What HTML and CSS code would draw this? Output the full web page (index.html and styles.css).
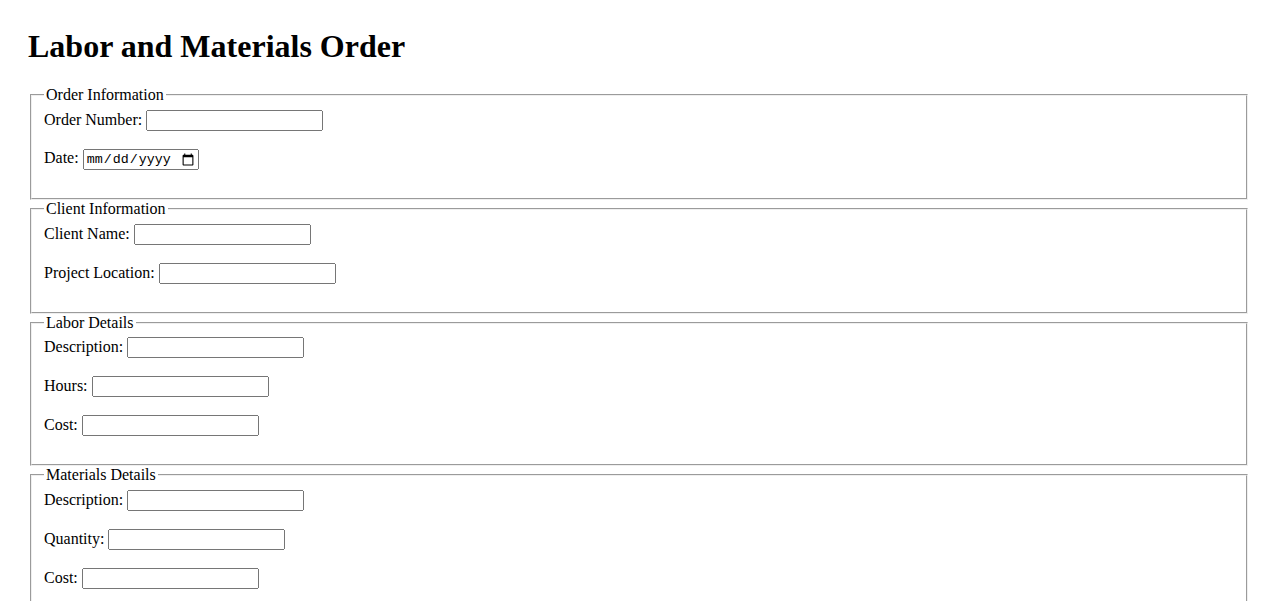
FILE: index.html
```html
<!DOCTYPE html>
<html lang="en">
<head>
<meta charset="utf-8">
<title>Labor and Materials Order</title>
<link rel="stylesheet" href="styles.css">
</head>
<body>
<div class="page">
<h1 class="title">Labor and Materials Order</h1>
<form class="order-form">
  <fieldset class="group">
    <legend class="group-title">Order Information</legend>
    <label class="field-label" for="orderNumber">Order Number:</label>
    <input class="field" type="text" id="orderNumber"><br><br>
    <label class="field-label" for="orderDate">Date:</label>
    <input class="field date" type="date" id="orderDate"><br><br>
  </fieldset>
  <fieldset class="group">
    <legend class="group-title">Client Information</legend>
    <label class="field-label" for="clientName">Client Name:</label>
    <input class="field" type="text" id="clientName"><br><br>
    <label class="field-label" for="projectLocation">Project Location:</label>
    <input class="field" type="text" id="projectLocation"><br><br>
  </fieldset>
  <fieldset class="group">
    <legend class="group-title">Labor Details</legend>
    <label class="field-label" for="laborDescription">Description:</label>
    <input class="field" type="text" id="laborDescription"><br><br>
    <label class="field-label" for="laborHours">Hours:</label>
    <input class="field" type="text" id="laborHours"><br><br>
    <label class="field-label" for="laborCost">Cost:</label>
    <input class="field" type="text" id="laborCost"><br><br>
  </fieldset>
  <fieldset class="group">
    <legend class="group-title">Materials Details</legend>
    <label class="field-label" for="materialsDescription">Description:</label>
    <input class="field" type="text" id="materialsDescription"><br><br>
    <label class="field-label" for="materialsQuantity">Quantity:</label>
    <input class="field" type="text" id="materialsQuantity"><br><br>
    <label class="field-label" for="materialsCost">Cost:</label>
    <input class="field" type="text" id="materialsCost"><br><br>
  </fieldset>
</form>
</div>
</body>
</html>
```

FILE: styles.css
```css
body {
  margin: 8px;
  font-family: "Liberation Serif", "Times New Roman", serif;
  font-size: 16px;
  color: #000;
  background: #fff;
}

.page {
  padding: 20px;
}

.title {
  font-size: 32px;
  font-weight: bold;
  margin: 0 0 21px;
}

.group {
  margin: 0 2px;
}

.field {
  font-family: "Liberation Sans", Arial, sans-serif;
  font-size: 13.33px;
  box-sizing: border-box;
  width: 177px;
}

.field.date {
  width: 116px;
  font-family: "Liberation Mono", "DejaVu Sans Mono", monospace;
}
```
